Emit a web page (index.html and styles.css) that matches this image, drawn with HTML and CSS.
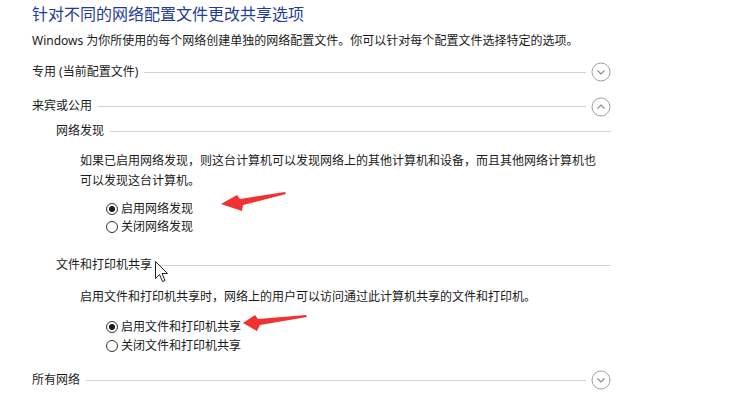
FILE: index.html
```html
<!DOCTYPE html>
<html lang="zh-CN">
<head>
    <meta charset="UTF-8">
    <meta name="viewport" content="width=device-width, initial-scale=1.0">
    <title>高级共享设置</title>
    <link rel="stylesheet" href="styles.css">
</head>
<body>
    <div class="page">
        <h1 class="title">针对不同的网络配置文件更改共享选项</h1>
        <p class="intro">Windows 为你所使用的每个网络创建单独的网络配置文件。你可以针对每个配置文件选择特定的选项。</p>

        <div class="section-head head-private">
            <span class="head-text">专用 (当前配置文件)</span>
            <span class="rule"></span>
            <svg class="toggle" width="20" height="20" viewBox="0 0 20 20">
                <circle cx="10" cy="10" r="9" fill="none" stroke="#a0a0a0" stroke-width="1"/>
                <polyline points="6.5,8.5 10,12 13.5,8.5" fill="none" stroke="#8c8c8c" stroke-width="1.2"/>
            </svg>
        </div>

        <div class="section-head head-guest">
            <span class="head-text">来宾或公用</span>
            <span class="rule"></span>
            <svg class="toggle toggle-up" width="20" height="20" viewBox="0 0 20 20">
                <circle cx="10" cy="10" r="9" fill="none" stroke="#a0a0a0" stroke-width="1"/>
                <polyline points="6.5,11.5 10,8 13.5,11.5" fill="none" stroke="#8c8c8c" stroke-width="1.2"/>
            </svg>
        </div>

        <div class="sub">
            <div class="sub-head sub-discovery">
                <span class="head-text">网络发现</span>
                <span class="rule"></span>
            </div>
            <p class="sub-desc para-discovery">如果已启用网络发现，则这台计算机可以发现网络上的其他计算机和设备，而且其他网络计算机也<br>可以发现这台计算机。</p>
            <div class="options options-discovery">
                <label class="option"><span class="radio checked"></span>启用网络发现</label>
                <label class="option"><span class="radio"></span>关闭网络发现</label>
            </div>

            <div class="sub-head sub-sharing">
                <span class="head-text">文件和打印机共享</span>
                <span class="rule"></span>
            </div>
            <p class="sub-desc para-sharing">启用文件和打印机共享时，网络上的用户可以访问通过此计算机共享的文件和打印机。</p>
            <div class="options options-sharing">
                <label class="option"><span class="radio checked"></span>启用文件和打印机共享</label>
                <label class="option"><span class="radio"></span>关闭文件和打印机共享</label>
            </div>
        </div>

        <div class="section-head head-all">
            <span class="head-text">所有网络</span>
            <span class="rule"></span>
            <svg class="toggle" width="20" height="20" viewBox="0 0 20 20">
                <circle cx="10" cy="10" r="9" fill="none" stroke="#a0a0a0" stroke-width="1"/>
                <polyline points="6.5,8.5 10,12 13.5,8.5" fill="none" stroke="#8c8c8c" stroke-width="1.2"/>
            </svg>
        </div>
    </div>

    <!-- annotation arrows and mouse pointer drawn over the page -->
    <svg class="marks" width="731" height="408" viewBox="0 0 731 408">
        <polygon points="221,204 237,195 240,199 285,192 286,194 243,205 242,211" fill="#f03232"/>
        <polygon points="243,323 255,315 258,319 306,315 307,317 260,325 257,331" fill="#f03232"/>
        <path d="M155.5 261.5 L155.5 278.5 L159.5 274.5 L162.5 281.5 L165 280.5 L162 273.5 L167.5 273.5 Z" fill="#fff" stroke="#222" stroke-width="1" stroke-linejoin="round"/>
    </svg>
</body>
</html>
```

FILE: styles.css
```css
body {
    margin: 0;
    padding: 0;
    background: #fff;
    font-family: "Noto Sans", "Noto Sans CJK SC", sans-serif;
    font-size: 12px;
    color: #1a1a1a;
}

.page {
    width: 579px;
    padding: 4px 0 0 32px;
}

.title {
    margin: 0;
    font-size: 16px;
    font-weight: normal;
    line-height: 20px;
    color: #1f3c99;
}

.intro {
    margin: 7px 0 0;
    line-height: 20px;
}

.section-head,
.sub-head {
    display: flex;
    align-items: center;
    height: 20px;
    line-height: 20px;
}

.head-private {
    margin-top: 11px;
}

.head-guest {
    margin-top: 14px;
}

.head-all {
    margin-top: 15px;
}

.rule {
    flex: 1;
    height: 0;
    border-top: 1px solid #d2d2d2;
    margin-left: 6px;
}

.toggle {
    margin-left: 5px;
    flex-shrink: 0;
}

.toggle-up {
    margin-top: 2px;
}

.sub {
    margin-left: 24px;
}

.sub-discovery {
    margin-top: 5px;
}

.sub-sharing {
    margin-top: 19px;
}

.sub-desc {
    margin: 0 0 0 24px;
    line-height: 20px;
}

.para-discovery {
    margin-top: 10px;
}

.para-sharing {
    margin-top: 12px;
}

.options {
    display: flex;
    flex-direction: column;
    margin-left: 50px;
}

.options-discovery {
    margin-top: 9px;
}

.options-sharing {
    margin-top: 10px;
}

.option {
    display: flex;
    align-items: center;
    height: 18px;
    line-height: 18px;
}

.options-sharing .option {
    height: 19px;
}

.radio {
    box-sizing: border-box;
    width: 12px;
    height: 12px;
    border: 1px solid #333;
    border-radius: 50%;
    margin-right: 3px;
    display: flex;
    align-items: center;
    justify-content: center;
    background: #fff;
}

.radio.checked::after {
    content: "";
    width: 6px;
    height: 6px;
    border-radius: 50%;
    background: #1a1a1a;
}

.marks {
    position: absolute;
    top: 0;
    left: 0;
    pointer-events: none;
}
```
